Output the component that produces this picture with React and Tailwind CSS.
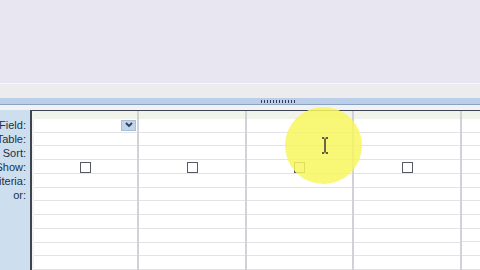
import React from 'react';

const labels = ['Field:', 'Table:', 'Sort:', 'Show:', 'Criteria:', 'or:'];

const Checkbox = () => (
  <div className="w-[11px] h-[11px] border border-[#555a63] bg-white" />
);

const Column = ({ index, width }) => (
  <div className={`${width} shrink-0 flex flex-col border-r-2 border-[#cfd2d6]`}>
    <div className="h-[8px] bg-[#f1f4ea]" />
    {Array.from({ length: 11 }).map((_, r) => (
      <div key={r} className="h-[14px] border-b border-[#e2e3e6] flex items-center justify-center relative">
        {r === 0 && index === 0 && (
          <div className="absolute right-[1px] top-[1px] w-[15px] h-[11px] bg-[#c3d4ea] border border-[#a9bedb] flex items-center justify-center">
            <svg width="8" height="6" viewBox="0 0 8 6">
              <path d="M1 1 L4 4 L7 1" stroke="#2a3f5f" strokeWidth="1.8" fill="none" />
            </svg>
          </div>
        )}
        {r === 3 && index < 4 && <div className="mt-[3px]"><Checkbox /></div>}
      </div>
    ))}
  </div>
);

export default function App() {
  return (
    <div className="w-[480px] h-[270px] overflow-hidden relative flex flex-col bg-[#f3f4f7]" style={{ fontFamily: '"Liberation Sans", Arial, sans-serif' }}>
      {/* top workspace */}
      <div className="h-[83px] shrink-0 bg-[#e8e6f0]" />
      {/* splitter */}
      <div className="h-[15px] shrink-0 bg-[#ececef] border-t border-[#f7f7f8]" />
      {/* blue divider */}
      <div className="h-[7px] shrink-0 bg-[#bccfe8] border-b border-[#8aa3c4] flex items-center justify-center">
        <div className="ml-[76px] w-[34px] h-[3px] bg-[repeating-linear-gradient(90deg,#2e3e56_0px,#2e3e56_1px,transparent_1px,transparent_3px)]" />
      </div>
      <div className="h-[5px] shrink-0 bg-[#f0f2f5]" />
      {/* design grid */}
      <div className="flex-1 flex min-h-0">
        <div className="w-[30px] shrink-0 bg-[#cddfee] overflow-hidden pt-[8px]">
          {labels.map((l) => (
            <div key={l} className="h-[14px] flex items-center justify-end pr-[4px] text-[11px] leading-none text-[#1d2f4a] whitespace-nowrap">
              {l}
            </div>
          ))}
        </div>
        <div className="flex-1 flex border-l-2 border-t border-[#3d4450] bg-white overflow-hidden">
          <div className="w-[2px] shrink-0 bg-[#f3f3f3]" />
          <Column index={0} width="w-[105px]" />
          <Column index={1} width="w-[108px]" />
          <Column index={2} width="w-[107px]" />
          <Column index={3} width="w-[108px]" />
          <Column index={4} width="w-[40px]" />
        </div>
      </div>
      {/* highlight overlay */}
      <div className="absolute left-[285px] top-[107px] w-[77px] h-[77px] rounded-full bg-[#f7f65e] opacity-85" />
      {/* I-beam cursor */}
      <svg className="absolute left-[321px] top-[137px]" width="8" height="17" viewBox="0 0 8 17">
        <path d="M1 1 H3.2 M4.8 1 H7 M4 1.5 V15.5 M1 16 H3.2 M4.8 16 H7" stroke="#2c2c2c" strokeWidth="1.4" fill="none" />
      </svg>
    </div>
  );
}
